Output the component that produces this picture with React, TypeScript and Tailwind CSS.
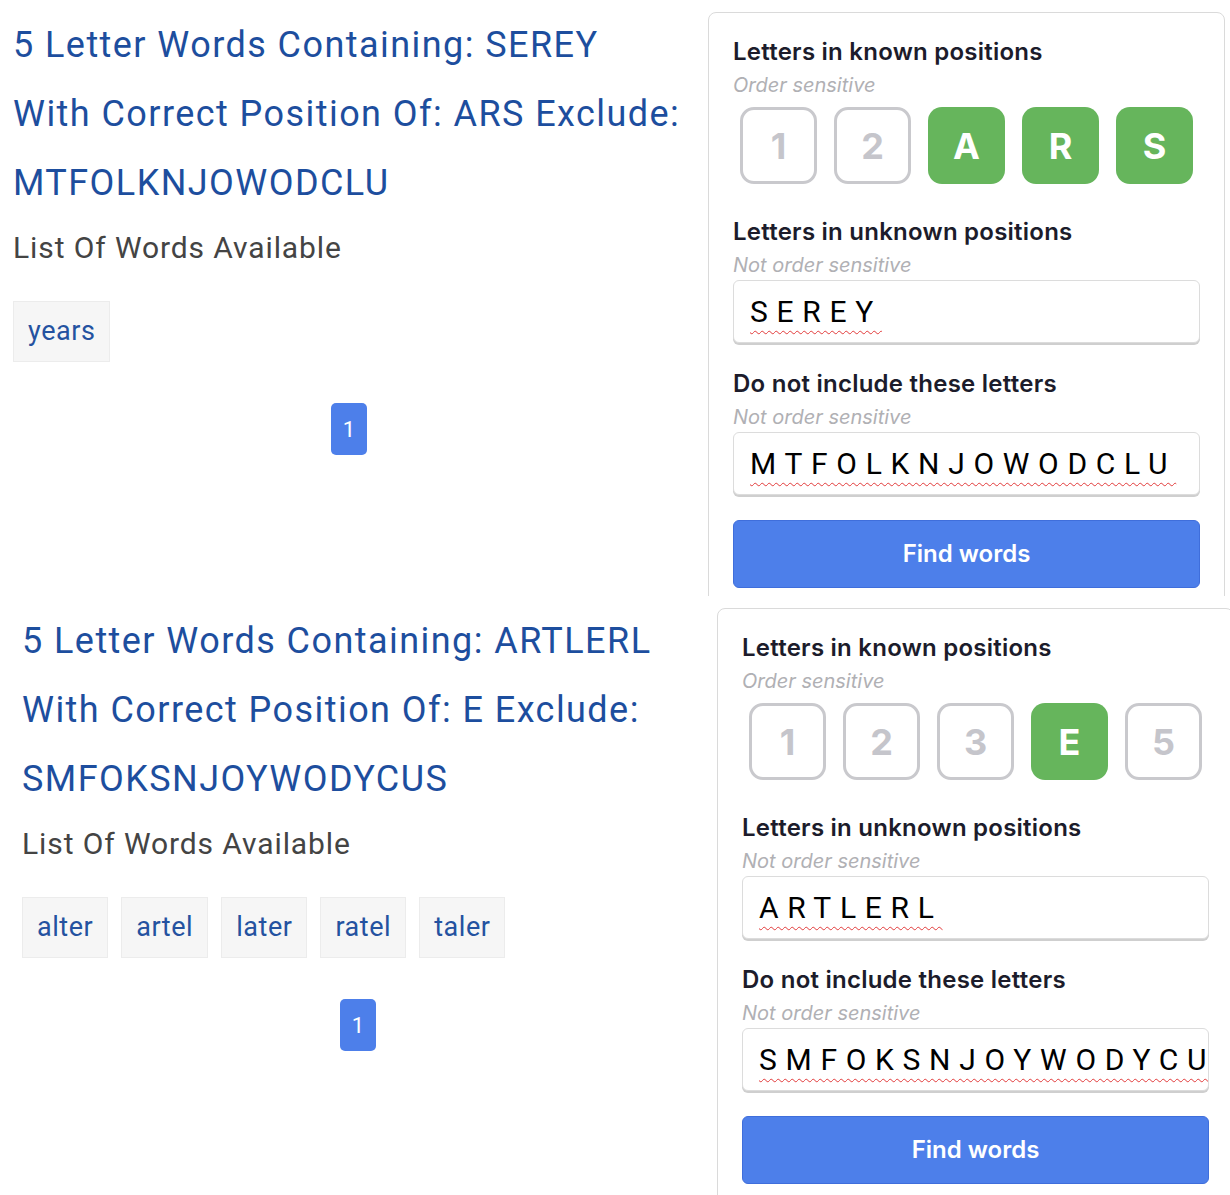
import React from "react";

type Shot = {
  heading: string[];
  words: string[];
  tiles: { value: string; filled: boolean }[];
  unknown: string;
  exclude: string;
};

const shots: Shot[] = [
  {
    heading: [
      "5 Letter Words Containing: SEREY",
      "With Correct Position Of: ARS Exclude:",
      "MTFOLKNJOWODCLU",
    ],
    words: ["years"],
    tiles: [
      { value: "1", filled: false },
      { value: "2", filled: false },
      { value: "A", filled: true },
      { value: "R", filled: true },
      { value: "S", filled: true },
    ],
    unknown: "SEREY",
    exclude: "MTFOLKNJOWODCLU",
  },
  {
    heading: [
      "5 Letter Words Containing: ARTLERL",
      "With Correct Position Of: E Exclude:",
      "SMFOKSNJOYWODYCUS",
    ],
    words: ["alter", "artel", "later", "ratel", "taler"],
    tiles: [
      { value: "1", filled: false },
      { value: "2", filled: false },
      { value: "3", filled: false },
      { value: "E", filled: true },
      { value: "5", filled: false },
    ],
    unknown: "ARTLERL",
    exclude: "SMFOKSNJOYWODYCUS",
  },
];

function Field({ label, sub, children }: { label: string; sub: string; children: React.ReactNode }) {
  return (
    <div>
      <div className="text-[24px] leading-[30px] font-semibold tracking-[0.01em] text-[#1c1c2b]">{label}</div>
      <div className="mt-[5px] text-[20px] leading-[26px] italic text-[#b0b0b4]">{sub}</div>
      {children}
    </div>
  );
}

function LetterBox({ text }: { text: string }) {
  return (
    <div className="mt-[2px] h-[63px] rounded-[6px] border border-[#dcdcdc] bg-white shadow-[0_2px_0_#cfcfcf] pl-[16px] flex items-center overflow-hidden whitespace-nowrap font-['Roboto',sans-serif]">
      <span className="text-[30px] tracking-[0.29em] text-black underline decoration-wavy decoration-[#e23b3b] decoration-1 underline-offset-[8px]">
        {text}
      </span>
    </div>
  );
}

function Screen({ shot }: { shot: Shot }) {
  return (
    <div className="flex items-start pt-[12px]">
      <div className="w-[672px] ml-[13px] shrink-0 font-['Roboto',sans-serif]">
        <h1 className="-mt-[1px] text-[36px] leading-[69px] tracking-[0.04em] text-[#1d4e9e]">
          {shot.heading.map((line) => (
            <div key={line} className="whitespace-nowrap">{line}</div>
          ))}
        </h1>
        <div className="mt-[10px] text-[30px] leading-[40px] tracking-[0.03em] text-[#444]">List Of Words Available</div>
        <div className="mt-[33px] flex gap-[13px]">
          {shot.words.map((w) => (
            <div
              key={w}
              className="h-[61px] px-[14px] flex items-center bg-[#f6f6f6] border border-[#ececec] text-[27px] tracking-[0.02em] text-[#2452a0]"
            >
              {w}
            </div>
          ))}
        </div>
        <div className="mt-[41px] flex justify-center">
          <div className="w-[36px] h-[52px] rounded-[5px] bg-[#4d7fea] text-white text-[22px] flex items-center justify-center">
            1
          </div>
        </div>
      </div>
      <div className="ml-[23px] w-[517px] shrink-0 rounded-[8px] border border-[#dadada] bg-white px-[24px] pt-[24px] pb-[30px] font-['Inter',sans-serif]">
        <Field label="Letters in known positions" sub="Order sensitive">
          <div className="mt-[9px] flex justify-center gap-[17px]">
            {shot.tiles.map((t, i) =>
              t.filled ? (
                <div
                  key={i}
                  className="w-[77px] h-[77px] rounded-[14px] bg-[#66b55c] text-white text-[36px] font-bold flex items-center justify-center"
                >
                  {t.value}
                </div>
              ) : (
                <div
                  key={i}
                  className="w-[77px] h-[77px] rounded-[14px] border-[3px] border-[#c9c9cd] bg-white text-[#c5c5cb] text-[36px] font-bold flex items-center justify-center"
                >
                  {t.value}
                </div>
              )
            )}
          </div>
        </Field>
        <div className="mt-[33px]">
          <Field label="Letters in unknown positions" sub="Not order sensitive">
            <LetterBox text={shot.unknown} />
          </Field>
        </div>
        <div className="mt-[26px]">
          <Field label="Do not include these letters" sub="Not order sensitive">
            <LetterBox text={shot.exclude} />
          </Field>
        </div>
        <button className="mt-[25px] w-full h-[68px] rounded-[6px] border border-[#3f6edb] bg-[#4d7fea] text-white text-[24px] font-semibold">
          Find words
        </button>
      </div>
    </div>
  );
}

export default function App() {
  return (
    <div className="w-[1230px] h-[1195px] overflow-hidden bg-white">
      <div className="h-[596px] overflow-hidden">
        <Screen shot={shots[0]} />
      </div>
      <div className="h-[599px] overflow-hidden pl-[9px]">
        <Screen shot={shots[1]} />
      </div>
    </div>
  );
}
